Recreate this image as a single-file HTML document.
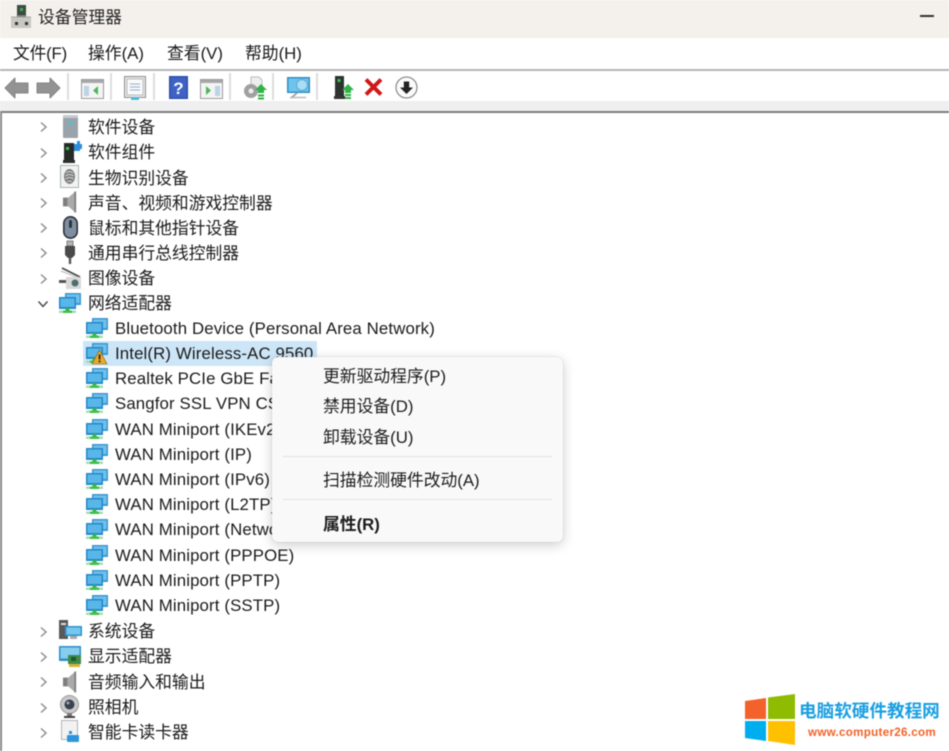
<!DOCTYPE html>
<html lang="zh-CN">
<head>
<meta charset="utf-8">
<title>设备管理器</title>
<style>
html,body{margin:0;padding:0;background:#fff}
body{position:relative;width:949px;height:751px;overflow:hidden;font-family:"Liberation Sans","Noto Sans CJK SC",sans-serif;color:#1a1a1a}
#wrap{position:absolute;left:0;top:0;width:949px;height:751px;overflow:hidden;filter:blur(.4px)}
.a{position:absolute}
.t{position:absolute;white-space:nowrap;font-size:16.8px;line-height:24px;height:24px;color:#1a1a1a}
.l{letter-spacing:.14px}
.c{position:absolute;left:37px;width:12px;height:12px}
.s{position:absolute;top:73px;width:2px;height:27px;background:#dcdcdc}
svg{position:absolute;overflow:visible}
.m{position:absolute;left:323px;white-space:nowrap;font-size:16.8px;line-height:24px;color:#1c1c1c}
</style>
</head>
<body>
<div id="wrap">
<svg width="0" height="0" style="position:absolute">
<defs>
<symbol id="net" viewBox="0 0 22 20" overflow="visible">
<rect x="6" y="0" width="16" height="12" fill="#3d97d2"/>
<rect x="7.5" y="1.5" width="13" height="8.5" fill="#6fc0ec"/>
<rect x="0" y="4" width="17" height="12" fill="#2489c9"/>
<rect x="1.500" y="5.500" width="14" height="8.500" fill="#58b6e8"/>
<rect x="6.500" y="15" width="4" height="3" fill="#39b54a"/>
<rect x="0" y="17.500" width="17" height="2.500" fill="#a9dcb0"/>
<rect x="4" y="17.500" width="9" height="2.500" fill="#3fbf4e"/>
</symbol>
<symbol id="chev" viewBox="0 0 12 12"><path d="M4 1.500 L9 6 L4 10.500" fill="none" stroke="#8f8f8f" stroke-width="1.500"/></symbol>
<symbol id="spk" viewBox="0 0 16 24"><path d="M0 7h6v10H0z" fill="#7f7f7f"/><path d="M5 8 L14 0 V24 L5 16z" fill="#aaa"/><path d="M14 0 V24" stroke="#7d7d7d" stroke-width="2"/></symbol>
</defs>
</svg>

<!-- title bar -->
<div class="a" style="left:0;top:0;width:949px;height:38px;background:#f4f1ec"></div>
<svg style="left:10px;top:4px" width="22" height="24" viewBox="0 0 22 24">
<rect x="7" y="1" width="9" height="12" fill="#3f4a45"/><rect x="10" y="4" width="3" height="3" fill="#35b54a"/>
<path d="M1 13h20v11H1z" fill="#c9c7c2"/><path d="M1 13h6v-1h9v1h5" stroke="#a9a7a3" fill="none"/>
<rect x="5" y="18" width="3" height="3" fill="#333"/><rect x="15" y="18" width="3" height="3" fill="#333"/>
</svg>
<div class="t" style="left:38px;top:6px;color:#222">设备管理器</div>
<div class="a" style="left:920px;top:15px;width:14px;height:2px;background:#333"></div>

<!-- menu -->
<div class="a" style="left:0;top:38px;width:949px;height:31px;background:#fff"></div>
<div class="t" style="left:13px;top:42px;letter-spacing:-.2px">文件(F)</div>
<div class="t" style="left:88px;top:42px">操作(A)</div>
<div class="t" style="left:167px;top:42px">查看(V)</div>
<div class="t" style="left:245px;top:42px">帮助(H)</div>
<div class="a" style="left:0;top:69px;width:949px;height:2px;background:#b4b4b4"></div>

<!-- toolbar -->
<div class="a" style="left:0;top:71px;width:949px;height:30px;background:#fff"></div>
<div class="a" style="left:0;top:101px;width:949px;height:10px;background:#efefef"></div>
<div class="a" style="left:0;top:111px;width:949px;height:2px;background:#7e7e7e"></div>
<div class="a" style="left:0;top:111px;width:2px;height:640px;background:#8a8a8a"></div>
<div class="s" style="left:67px"></div><div class="s" style="left:110px"></div><div class="s" style="left:153px"></div><div class="s" style="left:229px"></div><div class="s" style="left:272px"></div><div class="s" style="left:316px"></div>

<svg style="left:5px;top:77px" width="23" height="22" viewBox="0 0 23 22"><path d="M0 11 L10 1 V6 H23 V16 H10 V21z" fill="#939393" stroke="#858585" stroke-linejoin="round"/></svg>
<svg style="left:37px;top:77px" width="23" height="22" viewBox="0 0 23 22"><path d="M23 11 L13 1 V6 H0 V16 H13 V21z" fill="#939393" stroke="#858585" stroke-linejoin="round"/></svg>

<svg style="left:81px;top:79px" width="23" height="20" viewBox="0 0 23 20"><rect x=".5" y=".5" width="22" height="19" fill="#f4f4f4" stroke="#9a9a9a"/><rect x="1" y="1" width="21" height="3" fill="#a8a8a8"/><rect x="3" y="7" width="5" height="10" fill="#bcd3e8"/><path d="M17 7 L12 11.500 L17 16z" fill="#4bb85a"/></svg>

<svg style="left:124px;top:76px" width="22" height="24" viewBox="0 0 22 24"><rect x=".5" y=".5" width="21" height="21" fill="#e6e6e6" stroke="#8f8f8f"/><rect x="3" y="3" width="16" height="16" fill="#fafafa" stroke="#bbb"/><path d="M6 8h10M6 11h10M6 14h10" stroke="#8fb0c9"/><rect x="7" y="21" width="8" height="3" fill="#4fb8d8"/></svg>

<svg style="left:169px;top:76px" width="19" height="23" viewBox="0 0 19 23"><rect width="19" height="23" fill="#2c4fb0"/><rect x="1.500" y="1.500" width="16" height="20" fill="#3f63c4"/><text x="9.500" y="18" font-size="17" font-weight="bold" fill="#fff" text-anchor="middle" font-family="Liberation Sans">?</text></svg>

<svg style="left:200px;top:79px" width="23" height="20" viewBox="0 0 23 20"><rect x=".5" y=".5" width="22" height="19" fill="#f4f4f4" stroke="#9a9a9a"/><rect x="1" y="1" width="21" height="3" fill="#a8a8a8"/><rect x="15" y="7" width="5" height="10" fill="#bcd3e8"/><path d="M6 7 L11 11.500 L6 16z" fill="#4bb85a"/></svg>

<svg style="left:243px;top:76px" width="24" height="24" viewBox="0 0 24 24"><path d="M8 1h8l3 3v9H8z" fill="#eee" stroke="#bbb"/><circle cx="8" cy="15" r="7" fill="#a0a0a0"/><circle cx="8" cy="15" r="2.500" fill="#eee"/><path d="M18 8 L24 14 H21 V17 H15 V14 H12z" fill="#2fb344"/><rect x="15" y="18.500" width="6" height="2" fill="#2fb344"/><rect x="15" y="21.500" width="6" height="2" fill="#2fb344"/></svg>

<svg style="left:287px;top:77px" width="23" height="22" viewBox="0 0 23 22"><rect x="0" y="0" width="23" height="16" fill="#2f8fc6"/><rect x="1.500" y="1.500" width="20" height="13" fill="#6fc4ee"/><circle cx="15" cy="8" r="5.500" fill="#a9dcf5" stroke="#5aa8d0"/><path d="M10 16 L4 21" stroke="#999" stroke-width="1.500"/><path d="M3 20.500h16" stroke="#bbb" stroke-width="1.500"/></svg>

<svg style="left:334px;top:76px" width="20" height="23" viewBox="0 0 20 23"><rect x="1" y="0" width="9" height="20" fill="#2e332f"/><rect x="3.500" y="3" width="3" height="3" fill="#38c24e"/><rect x="0" y="20" width="11" height="3" fill="#333"/><path d="M14 8 L20 14 H17 V17 H11 V14 H8z" fill="#2fb344"/><rect x="11" y="18" width="6" height="2" fill="#2fb344"/><rect x="11" y="21" width="6" height="2" fill="#2fb344"/></svg>

<svg style="left:364px;top:78px" width="19" height="18" viewBox="0 0 19 18"><path d="M2 1.500 L17 16.500 M17 1.500 L2 16.500" stroke="#d01818" stroke-width="4"/></svg>

<svg style="left:395px;top:76px" width="23" height="23" viewBox="0 0 23 23"><circle cx="11.500" cy="11.500" r="10.500" fill="#fbfbfb" stroke="#8a8a8a" stroke-width="1.200"/><path d="M8.800 5.500h5.400v6h3.800L11.500 18 5 11.500h3.800z" fill="#222"/></svg>

<!-- tree chevrons -->
<svg class="c" style="top:121px"><use href="#chev" width="12" height="12"/></svg>
<svg class="c" style="top:147px"><use href="#chev" width="12" height="12"/></svg>
<svg class="c" style="top:172px"><use href="#chev" width="12" height="12"/></svg>
<svg class="c" style="top:197px"><use href="#chev" width="12" height="12"/></svg>
<svg class="c" style="top:222px"><use href="#chev" width="12" height="12"/></svg>
<svg class="c" style="top:247px"><use href="#chev" width="12" height="12"/></svg>
<svg class="c" style="top:273px"><use href="#chev" width="12" height="12"/></svg>
<svg style="left:37px;top:298px" width="12" height="12" viewBox="0 0 12 12"><path d="M1.500 3.500 L6 8.500 L10.500 3.500" fill="none" stroke="#444" stroke-width="1.400"/></svg>
<svg class="c" style="top:626px"><use href="#chev" width="12" height="12"/></svg>
<svg class="c" style="top:651px"><use href="#chev" width="12" height="12"/></svg>
<svg class="c" style="top:676px"><use href="#chev" width="12" height="12"/></svg>
<svg class="c" style="top:702px"><use href="#chev" width="12" height="12"/></svg>
<svg class="c" style="top:727px"><use href="#chev" width="12" height="12"/></svg>

<!-- category icons -->
<svg style="left:63px;top:115px" width="15" height="23" viewBox="0 0 15 23"><rect width="15" height="23" rx="1" fill="#9aa3aa"/><rect x="0" y="0" width="15" height="3" fill="#c6cbcf"/><rect x="6" y="6" width="3" height="4" fill="#45c4d8"/></svg>
<svg style="left:63px;top:141px" width="19" height="22" viewBox="0 0 19 22"><rect x="1" y="2" width="10" height="17" fill="#262b28"/><rect x="3" y="6" width="3" height="3" fill="#39c24e"/><rect x="0" y="19" width="12" height="3" fill="#2d2d2d"/><path d="M11 3h3V0h3v3h2v5h-2v2h-6z" fill="#2e8ede"/></svg>
<svg style="left:60px;top:165px" width="19" height="23" viewBox="0 0 19 23"><rect x=".5" y=".5" width="18" height="22" fill="#f1f3f2" stroke="#a8b4ae"/><ellipse cx="9.500" cy="11.500" rx="5.500" ry="7.500" fill="#7f7f7f"/><path d="M6 8q3.500-3 7 0M5.500 11q4-3 8 0M5.500 14q4-3 8 0M7 17q2.500-2 5 0" stroke="#e8e8e8" fill="none" stroke-width=".8"/></svg>
<svg style="left:63px;top:190px" width="14" height="24"><use href="#spk" width="14" height="24"/></svg>
<svg style="left:63px;top:216px" width="15" height="23" viewBox="0 0 15 23"><rect x=".8" y=".8" width="13.400" height="21.400" rx="6.700" fill="#7f8fa3" stroke="#2d3136" stroke-width="1.600"/><rect x="6" y="4" width="3" height="8" rx="1.500" fill="#2f3338"/></svg>
<svg style="left:64px;top:241px" width="12" height="23" viewBox="0 0 12 23"><rect x="3" y="0" width="6" height="5" fill="#b5b5b5" stroke="#666" stroke-width=".8"/><path d="M1 5h10v9l-3 3H4l-3-3z" fill="#4a4a4a"/><rect x="4.800" y="17" width="2.400" height="6" fill="#555"/></svg>
<svg style="left:59px;top:268px" width="23" height="21" viewBox="0 0 23 21"><path d="M3 0 L21 9" stroke="#444" stroke-width="1.600"/><path d="M2 3 L20 10" stroke="#ccc" stroke-width="1.500"/><rect x="0" y="12" width="7" height="3" fill="#555"/><rect x="7" y="9" width="15" height="12" fill="#d8d8d8"/><circle cx="16" cy="15" r="3.500" fill="#4c6e6e"/></svg>
<svg style="left:59px;top:293px" width="22" height="20"><use href="#net" width="22" height="20"/></svg>
<svg style="left:59px;top:620px" width="23" height="20" viewBox="0 0 23 20"><rect x="0" y="0" width="9" height="19" fill="#585858"/><rect x="2" y="3" width="5" height="2" fill="#ddd"/><rect x="6" y="6" width="17" height="10" fill="#2f93cf"/><rect x="7.500" y="7.500" width="14" height="7" fill="#76c6ee"/><rect x="11" y="16" width="7" height="3" fill="#aaa"/></svg>
<svg style="left:59px;top:646px" width="22" height="21" viewBox="0 0 22 21"><rect x="0" y="0" width="22" height="15" fill="#2f8fc6"/><rect x="1.500" y="1.500" width="19" height="11" fill="#86cdf0"/><rect x="9" y="9" width="13" height="9" fill="#3f8a4c"/><rect x="12" y="11" width="5" height="4" fill="#1f5a2a"/><rect x="10" y="18" width="11" height="3" fill="#d8b430"/></svg>
<svg style="left:63px;top:670px" width="14" height="24"><use href="#spk" width="14" height="24"/></svg>
<svg style="left:60px;top:695px" width="19" height="23" viewBox="0 0 19 23"><circle cx="9.500" cy="9.500" r="9" fill="#c9c9c9" stroke="#9a9a9a"/><circle cx="9.500" cy="9.500" r="5" fill="#39424d"/><circle cx="8" cy="8" r="1.500" fill="#9ab"/><rect x="7" y="18" width="5" height="3" fill="#777"/><rect x="4" y="21" width="11" height="2" fill="#444"/></svg>
<svg style="left:61px;top:720px" width="18" height="22" viewBox="0 0 18 22"><rect x=".5" y=".5" width="16" height="19" fill="#f2f2f2" stroke="#b3b3b3"/><rect x="8" y="11" width="3" height="3" fill="#2e95dd"/><rect x="6" y="15" width="12" height="7" rx="1" fill="#2e95dd"/></svg>

<!-- category labels -->
<div class="t" style="left:88px;top:116px">软件设备</div>
<div class="t" style="left:88px;top:141px">软件组件</div>
<div class="t" style="left:88px;top:167px">生物识别设备</div>
<div class="t" style="left:88px;top:192px">声音、视频和游戏控制器</div>
<div class="t" style="left:88px;top:217px">鼠标和其他指针设备</div>
<div class="t" style="left:88px;top:242px">通用串行总线控制器</div>
<div class="t" style="left:88px;top:267px">图像设备</div>
<div class="t" style="left:88px;top:292px">网络适配器</div>
<div class="t" style="left:88px;top:620px">系统设备</div>
<div class="t" style="left:88px;top:645px">显示适配器</div>
<div class="t" style="left:88px;top:671px">音频输入和输出</div>
<div class="t" style="left:88px;top:696px">照相机</div>
<div class="t" style="left:88px;top:721px">智能卡读卡器</div>

<!-- selected row -->
<div class="a" style="left:83px;top:341px;width:234px;height:25px;background:#cde6f7"></div>

<!-- adapters -->
<svg style="left:86px;top:318px" width="22" height="20"><use href="#net" width="22" height="20"/></svg>
<svg style="left:86px;top:343px" width="22" height="20"><use href="#net" width="22" height="20"/></svg>
<svg style="left:92px;top:350px" width="15" height="14" viewBox="0 0 15 14"><path d="M7.500 0 L15 14 H0z" fill="#e7a92a" stroke="#8a5a10" stroke-width=".6"/><rect x="6.700" y="4.500" width="1.700" height="5" fill="#222"/><rect x="6.700" y="10.500" width="1.700" height="1.800" fill="#222"/></svg>
<svg style="left:86px;top:368px" width="22" height="20"><use href="#net" width="22" height="20"/></svg>
<svg style="left:86px;top:393px" width="22" height="20"><use href="#net" width="22" height="20"/></svg>
<svg style="left:86px;top:419px" width="22" height="20"><use href="#net" width="22" height="20"/></svg>
<svg style="left:86px;top:444px" width="22" height="20"><use href="#net" width="22" height="20"/></svg>
<svg style="left:86px;top:469px" width="22" height="20"><use href="#net" width="22" height="20"/></svg>
<svg style="left:86px;top:494px" width="22" height="20"><use href="#net" width="22" height="20"/></svg>
<svg style="left:86px;top:519px" width="22" height="20"><use href="#net" width="22" height="20"/></svg>
<svg style="left:86px;top:545px" width="22" height="20"><use href="#net" width="22" height="20"/></svg>
<svg style="left:86px;top:570px" width="22" height="20"><use href="#net" width="22" height="20"/></svg>
<svg style="left:86px;top:595px" width="22" height="20"><use href="#net" width="22" height="20"/></svg>

<div class="t l" style="left:115px;top:317px">Bluetooth Device (Personal Area Network)</div>
<div class="t l" style="left:115px;top:342px">Intel(R) Wireless-AC 9560</div>
<div class="t l" style="left:115px;top:367px">Realtek PCIe GbE Family Controller</div>
<div class="t l" style="left:115px;top:392px">Sangfor SSL VPN CS Support System</div>
<div class="t l" style="left:115px;top:418px">WAN Miniport (IKEv2)</div>
<div class="t l" style="left:115px;top:443px">WAN Miniport (IP)</div>
<div class="t l" style="left:115px;top:468px">WAN Miniport (IPv6)</div>
<div class="t l" style="left:115px;top:493px">WAN Miniport (L2TP)</div>
<div class="t l" style="left:115px;top:518px">WAN Miniport (Network Monitor)</div>
<div class="t l" style="left:115px;top:544px">WAN Miniport (PPPOE)</div>
<div class="t l" style="left:115px;top:569px">WAN Miniport (PPTP)</div>
<div class="t l" style="left:115px;top:594px">WAN Miniport (SSTP)</div>

<!-- context menu -->
<div class="a" style="left:272px;top:357px;width:291px;height:185px;background:#f9f9f9;border-radius:6px;box-shadow:0 3px 12px rgba(0,0,0,.2),0 0 1px rgba(0,0,0,.3)"></div>
<div class="m" style="top:365px">更新驱动程序(P)</div>
<div class="m" style="top:395px">禁用设备(D)</div>
<div class="m" style="top:426px">卸载设备(U)</div>
<div class="a" style="left:283px;top:456px;width:269px;height:1px;background:#e3e3e3"></div>
<div class="m" style="top:469px">扫描检测硬件改动(A)</div>
<div class="a" style="left:283px;top:499px;width:269px;height:1px;background:#e3e3e3"></div>
<div class="m" style="top:513px;font-weight:bold">属性(R)</div>

<!-- watermark -->
<div class="a" style="left:740px;top:690px;width:209px;height:61px;background:#fff"></div>
<svg style="left:745px;top:694px" width="50" height="51" viewBox="0 0 50 51">
<path d="M0 7 L21 4 V25 H0z" fill="#f2622a"/>
<path d="M23 3.500 L50 0 V25 H23z" fill="#8fbc00"/>
<path d="M0 27 H21 V47 L0 44z" fill="#00adef"/>
<path d="M23 27 H50 V51 L23 47z" fill="#ffc000"/>
</svg>
<div class="t" style="left:799px;top:699px;font-size:17.6px;font-weight:bold;color:#1a9fe0">电脑软硬件教程网</div>
<div class="t" style="left:808px;top:721px;font-size:11.600px;font-weight:bold;color:#f2622a;letter-spacing:.3px">www.computer26.com</div>
</div>
</body>
</html>
